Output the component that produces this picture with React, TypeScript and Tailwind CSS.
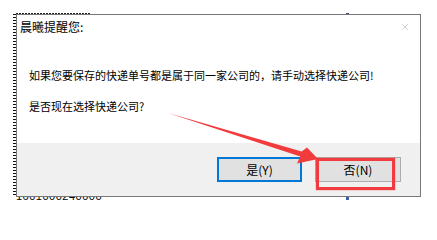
import { X } from "lucide-react";

const font = { fontFamily: '"Noto Sans CJK SC", "Noto Sans", sans-serif' };

function Arrow() {
  return (
    <svg className="pointer-events-none absolute left-0 top-0" width="437" height="213" viewBox="0 0 437 213">
      <polygon
        points="168,113 301.7,151.6 307,147.5 318,159 297,163.5 300.3,156.4"
        fill="#f23b3d"
      />
    </svg>
  );
}

export default function App() {
  return (
    <div className="relative h-[213px] w-[437px] overflow-hidden bg-white text-black" style={font}>
      {/* background leftovers behind the dialog */}
      <div className="absolute left-[13px] top-[14px] h-[183px] w-[3px] bg-[repeating-linear-gradient(to_bottom,#111_0_1px,transparent_1px_3px)]" />
      <div className="absolute left-[16px] top-[13px] h-[1px] w-[74px] bg-[repeating-linear-gradient(to_right,#222_0_2px,transparent_2px_3px)]" />
      <div className="absolute left-[346px] top-[13px] h-[1px] w-[3px] bg-[#3b4f7a]" />

      <div className="relative ml-[16px] mt-[14px] flex h-[183px] w-[405px] flex-col border border-[#777] bg-white">
        <div className="h-[128px] bg-white">
          <div className="flex items-start justify-between pl-[3px] pr-[9px] pt-[4px]">
            <span className="text-[12px] leading-[16px]">晨曦提醒您:</span>
            <X className="mt-[2px] size-[12px] text-[#a8a8a8]" strokeWidth={1} />
          </div>
          <div className="pl-[12px] pt-[32px] text-[11px] leading-[16px]">
            <p>如果您要保存的快递单号都是属于同一家公司的，请手动选择快递公司!</p>
            <p className="mt-[15px]">是否现在选择快递公司?</p>
          </div>
        </div>
        <div className="flex flex-1 items-start justify-end gap-[13px] bg-[#f0f0f0] pr-[19px] pt-[14px]">
          <button className="flex h-[25px] w-[85px] items-center justify-center border-2 border-[#0078d7] bg-[#e1e1e1] text-[12px]">
            是(Y)
          </button>
          <button className="flex h-[25px] w-[86px] items-center justify-center border border-[#adadad] bg-[#e1e1e1] text-[12px]">
            否(N)
          </button>
        </div>
      </div>

      {/* bottom sliver of the text behind the dialog */}
      <div className="ml-[16px] h-[3px] overflow-hidden">
        <div
          className="-mt-[7px] text-[11px] leading-[12px] tracking-[0.5px]"
          style={{ fontFamily: '"Liberation Sans", sans-serif' }}
        >
          1601000240000
        </div>
      </div>
      <div className="absolute left-[346px] top-[197px] h-[3px] w-[3px] bg-[#3b5fa3]" />

      <div className="pointer-events-none absolute left-[316px] top-[158px] h-[32px] w-[79px] border-[3px] border-[#f03c3e] shadow-[0_0_1px_#f03c3e]" />
      <Arrow />
    </div>
  );
}
